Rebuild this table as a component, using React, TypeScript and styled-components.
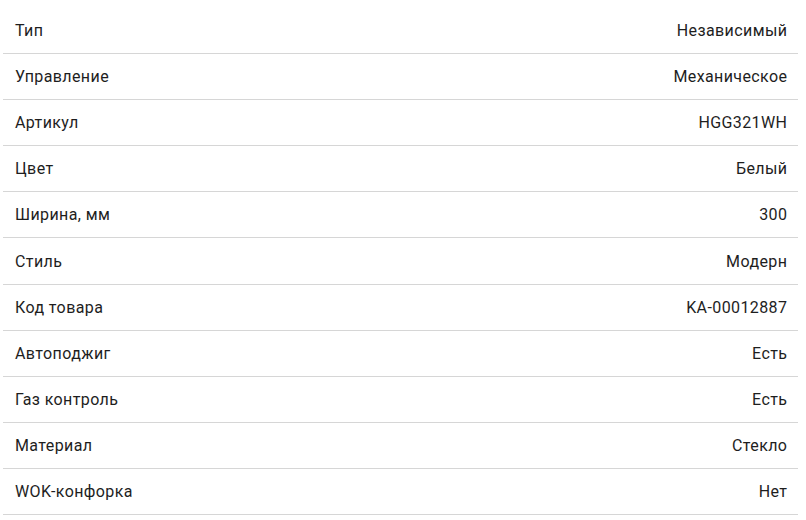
import React from "react";
import styled, { createGlobalStyle } from "styled-components";

const Global = createGlobalStyle`
  html, body { margin: 0; padding: 0; background: #ffffff; }
  body { font-family: Roboto, "Noto Sans", Arial, sans-serif; }
`;

const Table = styled.div`
  display: flex;
  flex-direction: column;
  padding: 8px 8px 0 3px;
`;

const Row = styled.div`
  display: flex;
  justify-content: space-between;
  align-items: center;
  height: 45.1px;
  padding: 0 11px 0 12px;
  border-bottom: 1px solid #d6d6d6;
  font-size: 16px;
  letter-spacing: 0.4px;
  color: #1e1e1e;
`;

const Label = styled.span``;
const Value = styled.span`
  text-align: right;
  margin-right: -0.4px;
`;

const data: [string, string][] = [
  ["Тип", "Независимый"],
  ["Управление", "Механическое"],
  ["Артикул", "HGG321WH"],
  ["Цвет", "Белый"],
  ["Ширина, мм", "300"],
  ["Стиль", "Модерн"],
  ["Код товара", "KA-00012887"],
  ["Автоподжиг", "Есть"],
  ["Газ контроль", "Есть"],
  ["Материал", "Стекло"],
  ["WOK-конфорка", "Нет"],
];

export default function App() {
  return (
    <>
      <Global />
      <Table>
        {data.map(([k, v]) => (
          <Row key={k}>
            <Label>{k}</Label>
            <Value>{v}</Value>
          </Row>
        ))}
      </Table>
    </>
  );
}
